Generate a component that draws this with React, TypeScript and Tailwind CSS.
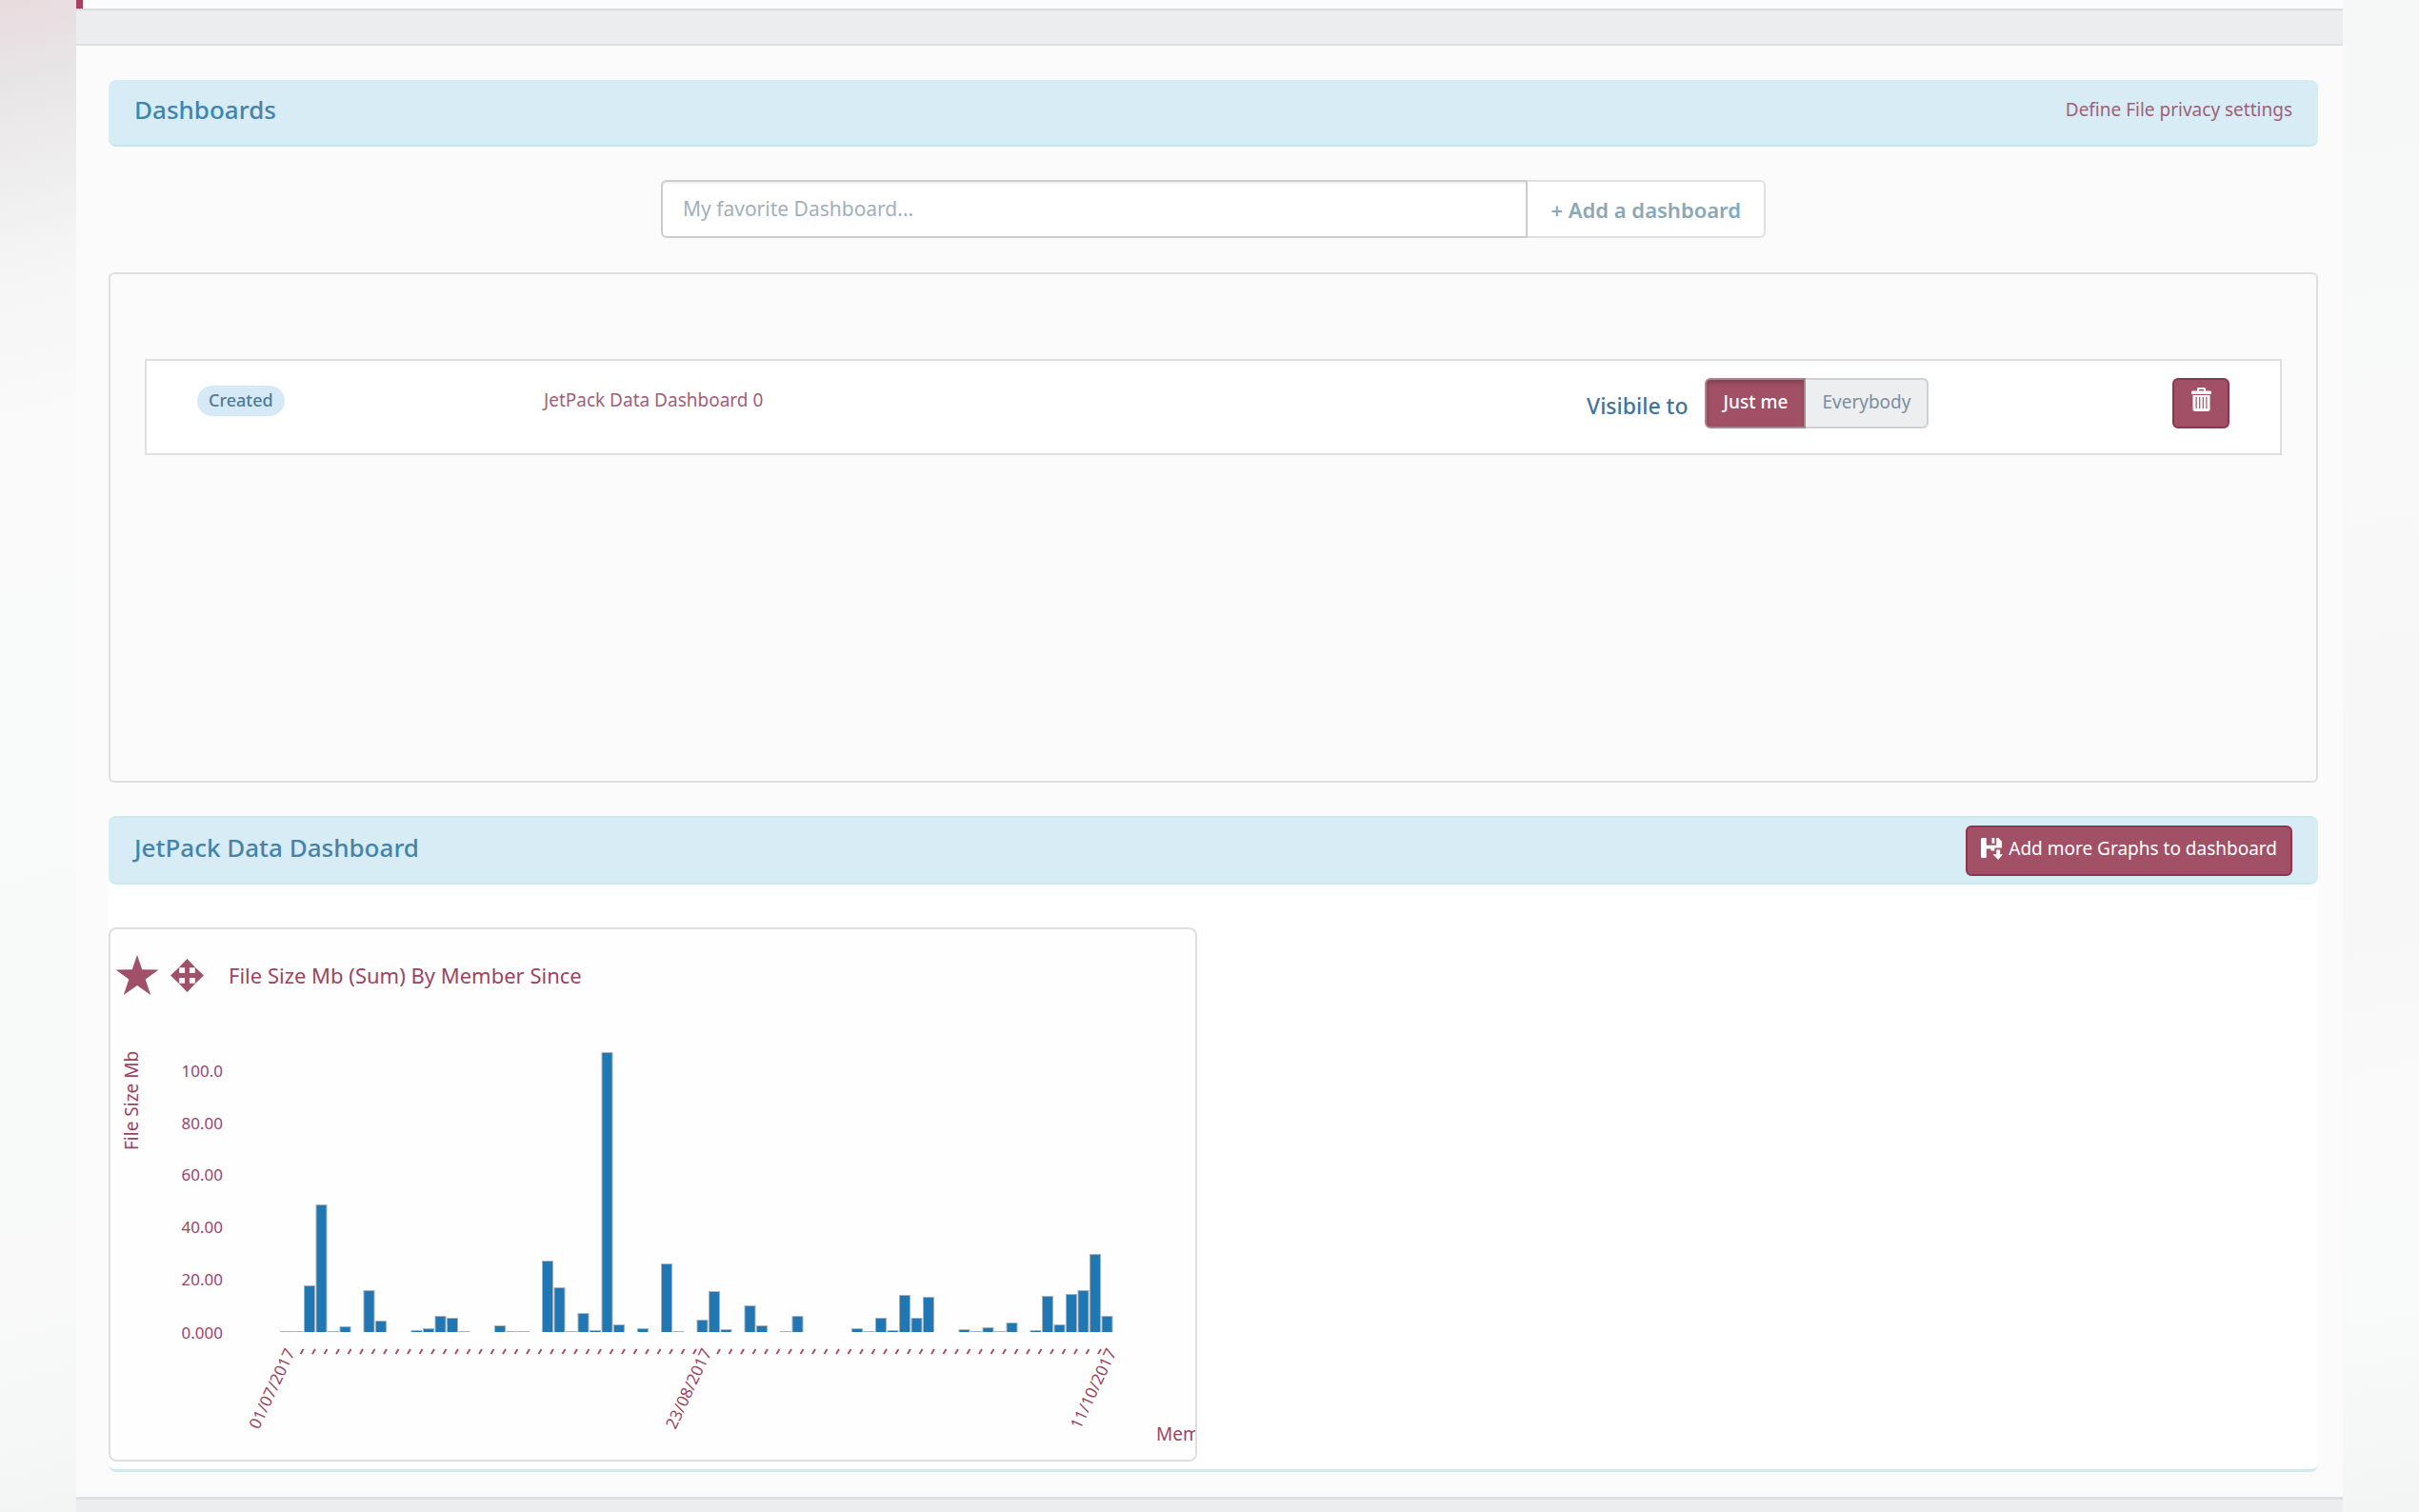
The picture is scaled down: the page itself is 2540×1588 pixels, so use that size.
import React, { useState } from "react";

const BAR_PITCH = 12.5;
const FIRST_BAR_X = 178;
const BASELINE = 327;

const BARS = [
  1, 1, 49, 134, 1, 6, 0, 44, 12, 0, 0, 2, 4, 17, 15, 1, 0, 0, 7, 1,
  1, 0, 75, 47, 1, 20, 2, 294, 8, 0, 4, 0, 72, 1, 0, 13, 43, 3, 0, 28,
  7, 0, 1, 17, 0, 0, 0, 0, 4, 1, 15, 2, 39, 15, 37, 0, 0, 3, 1, 5,
  1, 10, 0, 2, 38, 8, 40, 44, 82, 17,
];

const Y_TICKS = [
  { label: "100.0", y: 59 },
  { label: "80.00", y: 114 },
  { label: "60.00", y: 168 },
  { label: "40.00", y: 223 },
  { label: "20.00", y: 278 },
  { label: "0.000", y: 334 },
];

const DATES: Record<number, string> = { 0: "01/07/2017", 35: "23/08/2017", 69: "11/10/2017" };

function StarIcon() {
  return (
    <svg viewBox="0 0 46 42" className="h-[42px] w-[46px]" fill="#a05068" aria-hidden="true">
      <path d="M23 0 L28.2 15.2 L45.5 15.6 L31.7 25.4 L37.2 42 L23 32 L8.8 42 L14.3 25.4 L0.5 15.6 L17.8 15.2 Z" />
    </svg>
  );
}

function MoveIcon() {
  return (
    <svg viewBox="0 0 36 36" className="size-[35px]" fill="#a05068" aria-hidden="true">
      <path d="M18 0 L27 9.5 H20.5 V15.5 H26.5 V9 L36 18 L26.5 27 V20.5 H20.5 V26.5 H27 L18 36 L9 26.5 H15.5 V20.5 H9.5 V27 L0 18 L9.5 9 V15.5 H15.5 V9.5 H9 Z" />
    </svg>
  );
}

function TrashIcon() {
  return (
    <svg viewBox="0 0 21 25" className="h-[25px] w-[21px]" aria-hidden="true">
      <path fill="#fff" fillRule="evenodd" d="M7 0 H14 L15 1 V3.5 H20 L21 4.5 V7 H0 V4.5 L1 3.5 H6 V1 Z M8 2 V3.5 H13 V2 Z" />
      <path fill="#fff" fillRule="evenodd" d="M1.5 8 H19.5 V23.5 L18 25 H3 L1.5 23.5 Z M4.5 10 V22 H5.7 V10 Z M8.1 10 V22 H9.3 V10 Z M11.7 10 V22 H12.9 V10 Z M15.3 10 V22 H16.5 V10 Z" />
    </svg>
  );
}

function SaveIcon() {
  return (
    <svg viewBox="0 0 24 24" className="size-[23px]" fill="#fff" aria-hidden="true">
      <path d="M1 0 H6 V8 H17 V0 H19 L23 4 V11 H15 V14 H11 V12 H6 V22 H1 L0 21 V1 Z" />
      <path d="M12 0 H15 V6 H12 Z" />
      <path d="M17 13 H21 V18 H24 L19 24 L13 18 H17 Z" />
    </svg>
  );
}

function FileSizeChart() {
  return (
    <svg className="block h-[461px] w-full font-['Noto_Sans',sans-serif]" role="img" aria-label="File Size Mb by Member Since">
      <text x="29" y="136" transform="rotate(-90 29 136)" className="fill-[#9c4560] text-[19px]">
        File Size Mb
      </text>
      {Y_TICKS.map((t) => (
        <text key={t.label} x="118" y={t.y} textAnchor="end" className="fill-[#9c4560] text-[17px]">
          {t.label}
        </text>
      ))}
      {BARS.map((h, i) => {
        const x = FIRST_BAR_X + i * BAR_PITCH;
        if (h === 0) return null;
        return (
          <g key={i}>
            <rect x={x} y={BASELINE - h} width="12" height={h} fill="#aab2b8" />
            {h > 1 && <rect x={x + 1} y={BASELINE - h + 1} width="10" height={h - 1} fill="#1f77b4" />}
          </g>
        );
      })}
      {BARS.map((_, i) => {
        const x = FIRST_BAR_X + i * BAR_PITCH + 10;
        if (DATES[i]) {
          return (
            <text key={i} x={x + 6} y="348" textAnchor="end" transform={`rotate(-65 ${x + 6} 348)`} className="fill-[#9c4560] text-[17px]">
              {DATES[i]}
            </text>
          );
        }
        return <path key={i} d={`M${x - 1} 350 L${x + 2} 345`} stroke="#a84f69" strokeWidth="2" />;
      })}
      <text x="1098" y="441" className="fill-[#9c4560] text-[19px]">
        Member Since
      </text>
    </svg>
  );
}

export default function App() {
  const [name, setName] = useState("");
  const [visibility, setVisibility] = useState<"me" | "all">("me");
  const active = "bg-[#a25066] font-medium text-white shadow-[inset_0_3px_5px_rgba(0,0,0,0.2)]";
  const idle = "bg-[#eceeef] text-[#7b8ea0]";

  return (
    <div className="flex min-h-screen bg-[#fafafa] font-['Noto_Sans',sans-serif] text-[19px] leading-6">
      <div className="w-20 shrink-0 bg-[linear-gradient(165deg,#e9dbdf_0%,#e7e4e5_5%,#efeeef_12%,#f5f5f5_18%,#fafafa_29%,#f8f9f9_60%,#f9f9f9_85%,#f3f5f5_100%)]" />

      <main className="flex min-w-0 flex-1 flex-col bg-[#fbfbfb]">
        <div className="flex h-[11px] border-b-2 border-[#dadbdb] bg-[#fcfcfc]">
          <div className="w-[7px] bg-[#a5405f]" />
        </div>
        <div className="h-[37px] border-b-2 border-[#dfe0e1] bg-[#ecedee]" />

        <div className="pt-9 pr-[26px] pb-[26px] pl-[34px]">
          <header className="flex h-[70px] items-center justify-between rounded-lg border-b-2 border-[#c5e8f0] bg-[#d8ecf6] px-[27px] pb-1.5">
            <h1 className="text-[26px] leading-8 font-medium text-[#4384ab]">Dashboards</h1>
            <a href="#privacy" className="text-[#a06078]">
              Define File privacy settings
            </a>
          </header>

          <form className="mx-auto mt-[35px] flex h-[61px] w-1/2" onSubmit={(e) => e.preventDefault()}>
            <input
              type="text"
              aria-label="Dashboard name"
              placeholder="My favorite Dashboard..."
              value={name}
              onChange={(e) => setName(e.target.value)}
              className="min-w-0 flex-1 rounded-l-md border-2 border-[#cbcccd] bg-white px-[21px] pb-0.5 text-[21px] text-[#5a6b7a] shadow-[inset_0_2px_2px_rgba(0,0,0,0.06)] placeholder:text-[#a3afba] focus:outline-none"
            />
            <button type="submit" className="rounded-r-md border-2 border-l-0 border-[#dfe0e0] bg-white px-6 text-[22px] font-semibold text-[#87a9bb]">
              + Add a dashboard
            </button>
          </form>

          <section className="mt-9 min-h-[536px] rounded-md border-2 border-[#dfdfdf] px-9 pt-[89px]">
            <div className="grid grid-cols-[364fr_1095fr_675fr] border-2 border-[#dfdfdf] bg-white px-[53px] pt-[18px] pb-[26px]">
              <div className="flex items-center pb-1.5">
                <span className="flex h-8 items-center rounded-full bg-[#d5eaf6] px-3 pb-0.5 text-[18px] font-medium text-[#4f7c94]">Created</span>
              </div>
              <div className="flex items-center pb-2 text-[#a06078]">JetPack Data Dashboard 0</div>
              <div className="flex items-center justify-between">
                <div className="flex items-center gap-[18px]">
                  <span id="visible-to" className="pt-1 text-[23px] leading-7 font-medium text-[#447396]">
                    Visibile to
                  </span>
                  <div role="group" aria-labelledby="visible-to" className="flex h-[53px]">
                    <button
                      type="button"
                      aria-pressed={visibility === "me"}
                      onClick={() => setVisibility("me")}
                      className={`w-[106px] rounded-l-md border-2 border-[#a8868f] pb-1 ${visibility === "me" ? active : idle}`}
                    >
                      Just me
                    </button>
                    <button
                      type="button"
                      aria-pressed={visibility === "all"}
                      onClick={() => setVisibility("all")}
                      className={`w-[129px] rounded-r-md border-2 border-l-0 border-[#cfd0d1] pb-1 ${visibility === "all" ? active : idle}`}
                    >
                      Everybody
                    </button>
                  </div>
                </div>
                <button type="button" aria-label="Delete dashboard" className="flex h-[53px] w-[60px] items-center justify-center rounded-md border-2 border-[#8f3450] bg-[#a25066] pb-2">
                  <TrashIcon />
                </button>
              </div>
            </div>
          </section>

          <section className="mt-[35px] rounded-lg border-b-[3px] border-[#cdebef] bg-white pb-2">
            <header className="flex h-[72px] items-center justify-between rounded-lg border-y-2 border-[#c9ebf0] bg-[#d8ecf6] px-[27px]">
              <h2 className="pb-1.5 text-[26px] leading-8 font-medium text-[#4384ab]">JetPack Data Dashboard</h2>
              <button type="button" className="flex h-[53px] items-center gap-1.5 rounded-md border-2 border-[#8f3450] bg-[#a25066] px-3.5 pb-1 text-white">
                <SaveIcon />
                <span>Add more Graphs to dashboard</span>
              </button>
            </header>

            <article className="mt-[45px] w-[49.25%] overflow-hidden rounded-lg border-2 border-[#dfdfdf] bg-[#fefefe]">
              <div className="flex h-24 items-center pl-[5px]">
                <button type="button" aria-label="Mark as favorite">
                  <StarIcon />
                </button>
                <button type="button" aria-label="Move graph" className="ml-3">
                  <MoveIcon />
                </button>
                <h3 className="ml-[26px] text-[22px] leading-7 text-[#9c4560]">File Size Mb (Sum) By Member Since</h3>
              </div>
              <FileSizeChart />
            </article>
          </section>
        </div>

        <div className="min-h-4 flex-1 border-t-[3px] border-[#dfe0e0] bg-[#ecedee]" />
      </main>

      <div className="w-20 shrink-0 bg-[linear-gradient(170deg,#f6f8f8_0%,#f7f9f8_18%,#f9f9f9_28%,#f7f7f7_48%,#f7f7f7_60%,#fafafa_75%,#f8f9f9_88%,#f3f5f4_100%)]" />
    </div>
  );
}
